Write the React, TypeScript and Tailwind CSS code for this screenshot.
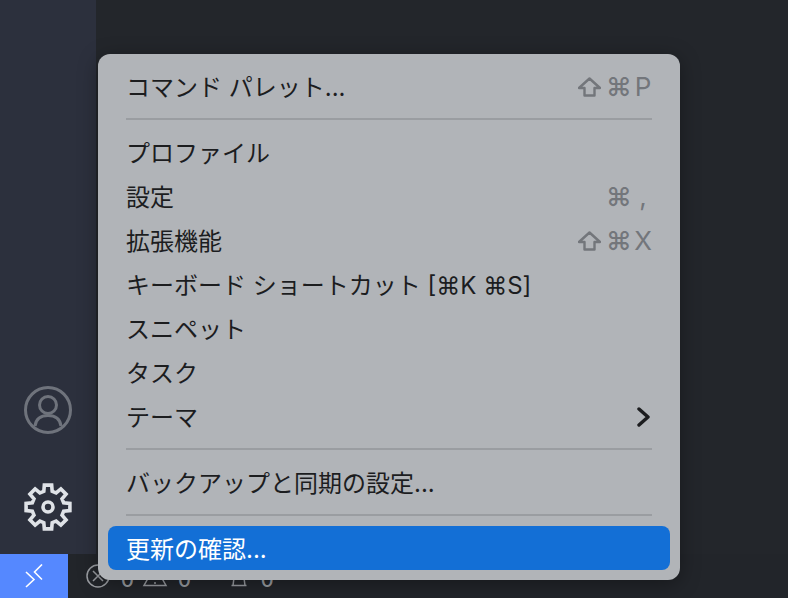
import React from "react";

const Sep = () => <div className="mx-[28px] my-[10px] h-[2px] bg-[#9a9da1]" />;

function Row({ label, right, active }: { label: string; right?: React.ReactNode; active?: boolean }) {
  return (
    <div className={`mx-[10px] flex h-[44px] items-center justify-between rounded-[8px] px-[18px] ${active ? "bg-[#136fd6] text-white" : "text-[#1c1d1f]"}`}>
      <span className="whitespace-pre pt-[4px]">{label}</span>
      {right}
    </div>
  );
}

const Shift = () => (
  <svg width="23" height="20" viewBox="0 0 23 20" fill="none" stroke="#73767b" strokeWidth="2.4" strokeLinejoin="round">
    <path d="M11.5 1.5 L22 11 H16.5 V18.5 H6.5 V11 H1 Z" />
  </svg>
);

const Keys = ({ shift, k }: { shift?: boolean; k: string }) => (
  <div className="flex items-center gap-[5px] pt-[1px] text-[#73767b]">
    {shift && <Shift />}
    <span className="mr-[3px] w-[20px] text-center text-[26px] font-medium leading-none">⌘</span>
    <span className="w-[18px] text-center text-[26px] leading-none">{k}</span>
  </div>
);

function gearPath() {
  const c = 24;
  const pts: string[] = [];
  for (let i = 0; i < 8; i++) {
    const a = (i * 45 - 90) * (Math.PI / 180);
    const items: [number, number][] = [
      [16.2, -15],
      [22.2, -9.5],
      [22.2, 9.5],
      [16.2, 15],
    ];
    for (const [r, d] of items) {
      const t = a + (d * Math.PI) / 180;
      pts.push(`${(c + r * Math.cos(t)).toFixed(2)} ${(c + r * Math.sin(t)).toFixed(2)}`);
    }
  }
  return `M${pts.join(" L")} Z`;
}

export default function App() {
  return (
    <div className="relative flex h-[598px] w-[788px] flex-col overflow-hidden bg-[#23262b] font-['Inter','Noto_Sans_CJK_JP',sans-serif]">
      <div className="flex min-h-0 flex-1">
        <div className="flex w-[96px] flex-col items-center justify-end gap-[49px] bg-[#2c303d] pb-[23px]">
          <svg width="48" height="48" viewBox="0 0 48 48" fill="none" stroke="#6f737c" strokeWidth="3">
            <circle cx="24" cy="24" r="22.5" />
            <circle cx="24" cy="19" r="8.5" />
            <path d="M11 40 C12 33 17 29.5 24 29.5 C31 29.5 36 33 37 40" />
          </svg>
          <svg width="48" height="48" viewBox="0 0 48 48" fill="none" stroke="#dfe2e7" strokeWidth="3.6" strokeLinejoin="miter">
            <circle cx="24" cy="24" r="5" />
            <path d={gearPath()} />
          </svg>
        </div>
        <div className="flex-1" />
      </div>
      <div className="flex h-[44px] items-center bg-[#22252a]">
        <div className="flex h-full w-[68px] items-center justify-center bg-[#5588ff]">
          <svg width="24" height="24" viewBox="0 0 24 24" fill="none" stroke="#ffffff" strokeWidth="1.6">
            <path d="M4 8 L12 15.5 L4 23" />
            <path d="M20 0.5 L12.5 8 L20 15.5" />
          </svg>
        </div>
        <div className="ml-[18px] flex items-center text-[#9a9da2]">
          <svg width="24" height="24" viewBox="0 0 24 24" fill="none" stroke="currentColor" strokeWidth="1.5">
            <circle cx="12" cy="12" r="11" />
            <path d="M7 7 L17 17 M17 7 L7 17" />
          </svg>
          <span className="ml-[11px] mt-[8px] text-[20px] font-medium leading-none">0</span>
          <svg className="ml-[8px]" width="26" height="24" viewBox="0 0 26 24" fill="none" stroke="currentColor" strokeWidth="1.5">
            <path d="M13 2 L24 21.5 H2 Z" />
            <path d="M13 10 V16 M13 18 V20" />
          </svg>
          <span className="ml-[10px] mt-[8px] text-[20px] font-medium leading-none">0</span>
          <svg className="ml-[40px]" width="16" height="24" viewBox="0 0 16 24" fill="none" stroke="currentColor" strokeWidth="1.5">
            <path d="M8 1 C5 1 4 5 3.5 10 L2 21.5 M8 1 C11 1 12 5 12.5 10 L14 21.5 M0.5 21.5 H15.5 M3.2 15 H12.8" />
          </svg>
          <span className="ml-[14px] mt-[8px] text-[20px] font-medium leading-none">0</span>
        </div>
      </div>
      <div className="absolute left-[98px] top-[54px] w-[582px] rounded-[12px] bg-[#b1b4b8] py-[10px] text-[24px] shadow-[0_4px_20px_rgba(0,0,0,0.35)]">
        <Row label="コマンド パレット..." right={<Keys shift k="P" />} />
        <Sep />
        <Row label="プロファイル" />
        <Row label="設定" right={<Keys k="," />} />
        <Row label="拡張機能" right={<Keys shift k="X" />} />
        <Row label="キーボード ショートカット [⌘K ⌘S]" />
        <Row label="スニペット" />
        <Row label="タスク" />
        <Row
          label="テーマ"
          right={
            <svg className="mr-[2px] mt-[2px]" width="13" height="20" viewBox="0 0 13 20" fill="none" stroke="#1c1d1f" strokeWidth="3.4" strokeLinecap="round" strokeLinejoin="round">
              <path d="M2 2 L11 10 L2 18" />
            </svg>
          }
        />
        <Sep />
        <Row label="バックアップと同期の設定..." />
        <Sep />
        <Row label="更新の確認..." active />
      </div>
    </div>
  );
}
